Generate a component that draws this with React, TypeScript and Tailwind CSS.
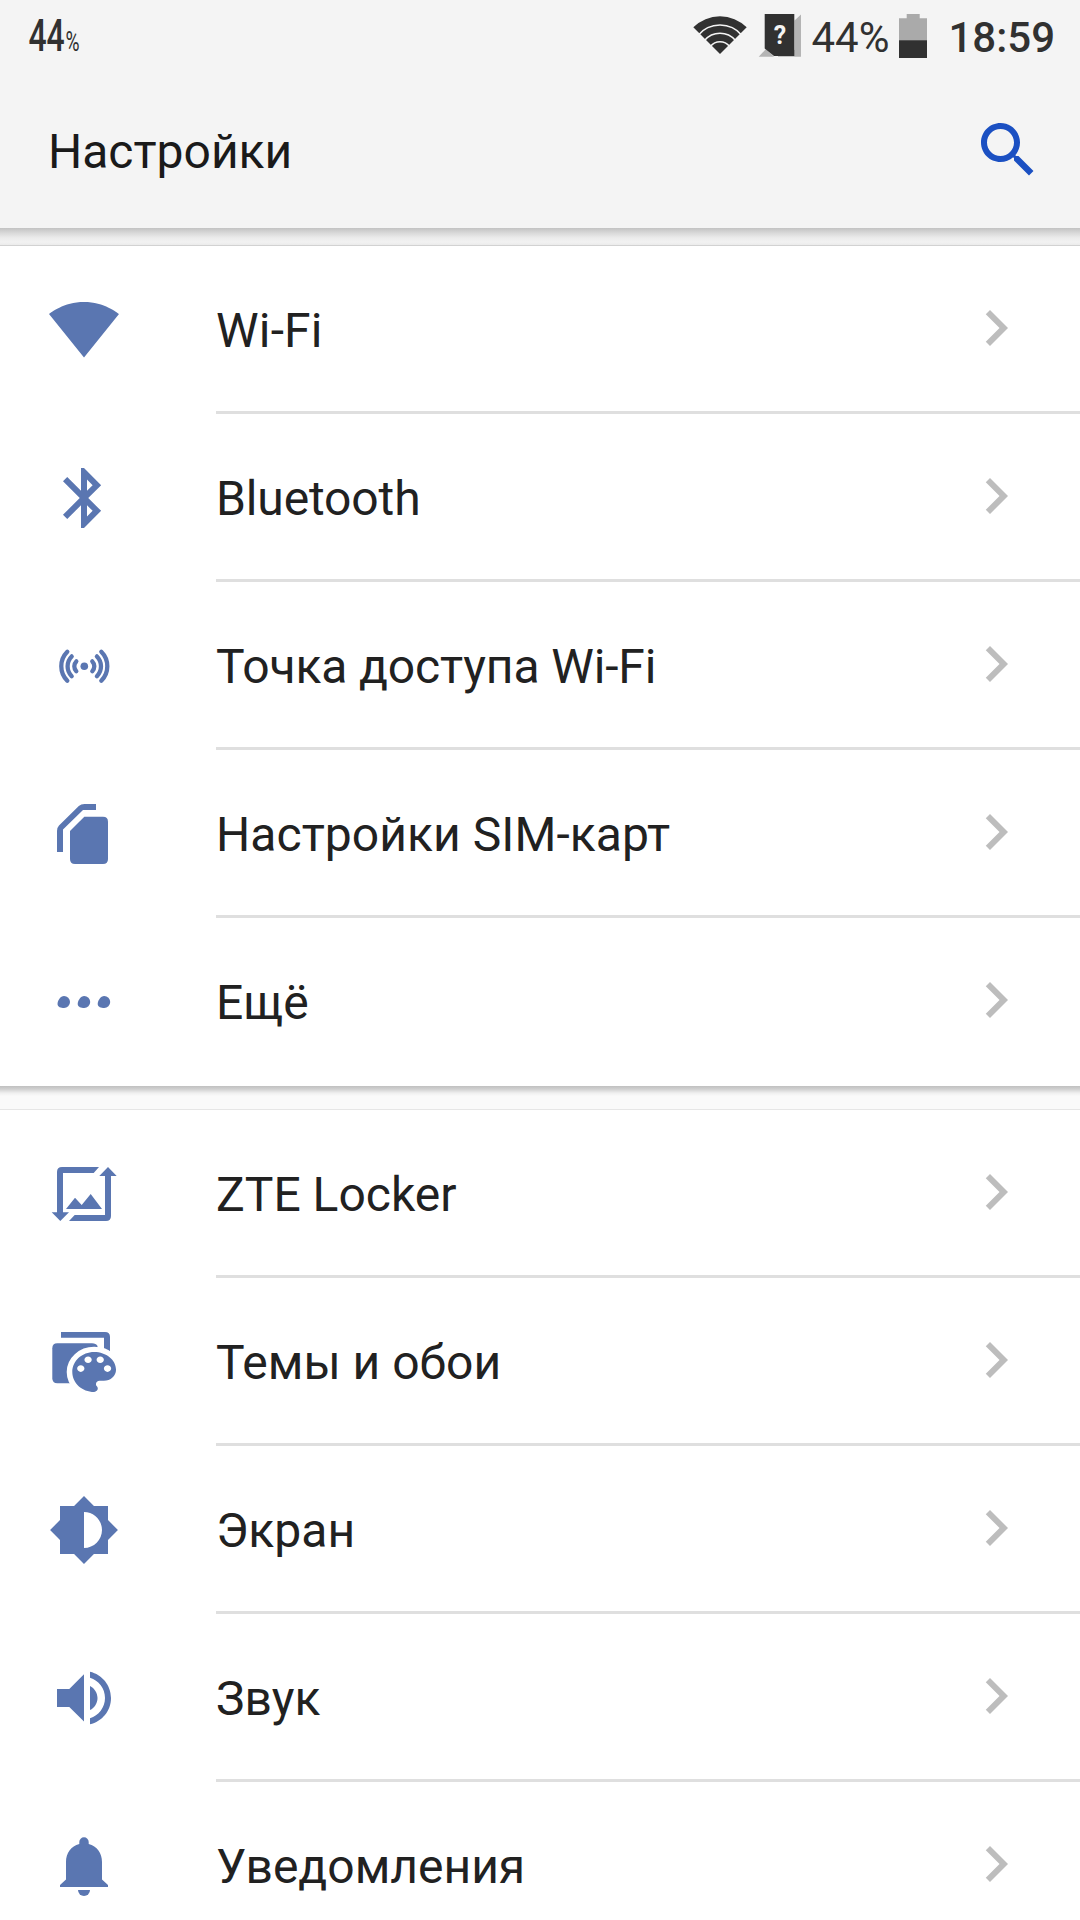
import type { ReactNode } from 'react';

type SettingsItem = { id: string; label: string; icon: ReactNode; tracking?: string };

const connectionItems: SettingsItem[] = [
    {
        id: 'wifi',
        label: 'Wi-Fi',
        tracking: 'tracking-[0.2px]',
        icon: <path d="M36 63.5L71 20C69.5 19 56.5 8 36 8S2.5 19 1 20z" />,
    },
    {
        id: 'bluetooth',
        label: 'Bluetooth',
        tracking: 'tracking-[-0.13px]',
        icon: (
            <path
                transform="scale(3)"
                d="M17.71 7.71L12 2h-1v7.59L6.41 5 5 6.41 10.59 12 5 17.59 6.41 19 11 14.41V22h1l5.71-5.71-4.3-4.29 4.3-4.29zM13 5.83l1.88 1.88L13 9.59V5.83zm1.88 10.46L13 18.17v-3.76l1.88 1.88z"
            />
        ),
    },
    {
        id: 'hotspot',
        label: 'Точка доступа Wi-Fi',
        tracking: 'tracking-[-0.13px]',
        icon: (
            <>
                <circle cx="36.3" cy="36.3" r="3.8" />
                <g fill="none" stroke="currentColor" strokeWidth="4.3" strokeLinecap="round">
                    <path d="M19.3 21.8A20.5 20.5 0 0 0 19.3 50.8M23.7 26.4A14 14 0 0 0 23.7 46.2M28.3 31.4A7 7 0 0 0 28.3 41.2" />
                    <path d="M53.3 21.8A20.5 20.5 0 0 1 53.3 50.8M48.9 26.4A14 14 0 0 1 48.9 46.2M44.3 31.4A7 7 0 0 1 44.3 41.2" />
                </g>
            </>
        ),
    },
    {
        id: 'sim',
        label: 'Настройки SIM-карт',
        tracking: 'tracking-[0.06px]',
        icon: (
            <>
                <path d="M48 6H36.5Q33 6 30.8 8L11 27.5Q9 29.5 9 33V54H15V31.5L35 12H48z" />
                <path d="M36.3 18.7H55Q60 18.7 60 23.7V61Q60 66 55 66H27Q22 66 22 61V33z" />
            </>
        ),
    },
    {
        id: 'more',
        label: 'Ещё',
        icon: (
            <>
                <path id="dot" d="M9.5 38C9.5 34.5 12.5 30 16 30A6 6 0 0 1 16 42C13 42 9.5 41 9.5 38z" />
                <use href="#dot" x="20.2" />
                <use href="#dot" x="40.2" />
            </>
        ),
    },
];

const deviceItems: SettingsItem[] = [
    {
        id: 'locker',
        label: 'ZTE Locker',
        icon: (
            <>
                <path d="M51 9H14Q9 9 9 14V54.3H3.7L12.3 63L21 54.3H15V15H45.7z" />
                <path d="M21 63H58Q63 63 63 58V18H68.7L60 9L51.3 18H57V57H26.7z" />
                <path d="M18 51L27 39.7L33.7 47L42.7 36L54 51z" />
            </>
        ),
    },
    {
        id: 'themes',
        label: 'Темы и обои',
        icon: (
            <>
                <path d="M13 6H57Q62 6 62 11V28H56V11.7H13z" />
                <path d="M9.3 17.3H44Q48 17.3 49.5 20V57.3H9.3Q4.3 57.3 4.3 52.3V22.3Q4.3 17.3 9.3 17.3z" />
                <g transform="translate(17 19.3) scale(2.43 2.22)">
                    <path
                        className="fill-white stroke-white"
                        strokeWidth="4.6"
                        d="M12 3c-4.97 0-9 4.03-9 9s4.03 9 9 9c.83 0 1.5-.67 1.5-1.5 0-.39-.15-.74-.39-1.01-.23-.26-.38-.61-.38-.99 0-.83.67-1.5 1.5-1.5H16c2.76 0 5-2.24 5-5 0-4.42-4.03-8-9-8z"
                    />
                    <path d="M12 3c-4.97 0-9 4.03-9 9s4.03 9 9 9c.83 0 1.5-.67 1.5-1.5 0-.39-.15-.74-.39-1.01-.23-.26-.38-.61-.38-.99 0-.83.67-1.5 1.5-1.5H16c2.76 0 5-2.24 5-5 0-4.42-4.03-8-9-8zm-5.5 9c-.83 0-1.5-.67-1.5-1.5S5.67 9 6.5 9 8 9.67 8 10.5 7.33 12 6.5 12zm3-4C8.67 8 8 7.33 8 6.5S8.67 5 9.5 5s1.5.67 1.5 1.5S10.33 8 9.5 8zm5 0c-.83 0-1.5-.67-1.5-1.5S13.67 5 14.5 5s1.5.67 1.5 1.5S15.33 8 14.5 8zm3 4c-.83 0-1.5-.67-1.5-1.5S16.67 9 17.5 9s1.5.67 1.5 1.5-.67 1.5-1.5 1.5z" />
                </g>
            </>
        ),
    },
    {
        id: 'display',
        label: 'Экран',
        icon: (
            <path
                transform="scale(3)"
                d="M20 15.31L23.31 12 20 8.69V4h-4.69L12 .69 8.69 4H4v4.69L.69 12 4 15.31V20h4.69L12 23.31 15.31 20H20v-4.69zM12 18V6c3.31 0 6 2.69 6 6s-2.69 6-6 6z"
            />
        ),
    },
    {
        id: 'sound',
        label: 'Звук',
        icon: (
            <path
                transform="scale(3)"
                d="M3 9v6h4.1l4.9 4.8V4.1L7.1 9H3zm13.5 3c0-1.77-1.02-3.29-2.5-4.03v8.05c1.48-.73 2.5-2.25 2.5-4.02zM14 3.23v2.06c2.89.86 5 3.54 5 6.71s-2.11 5.85-5 6.71v2.06c4.01-.91 7-4.49 7-8.77s-2.99-7.86-7-8.77z"
            />
        ),
    },
    {
        id: 'notifications',
        label: 'Уведомления',
        icon: (
            <>
                <path d="M12 57V55L18 49.5V32C18 23 23 16 31.3 14V12A4.7 4.7 0 0 1 40.7 12V14C49 16 54 23 54 32V49.5L60 55V57z" />
                <path d="M30 60H42A6 6 0 0 1 30 60z" />
            </>
        ),
    },
];

const StatusBar = () => (
    <div className="h-[72px] shrink-0 flex items-start justify-between text-[#313131]">
        <div className="pl-10 pt-[9px] flex items-baseline origin-left scale-x-[0.71] w-[110px]">
            <span className="text-[45px] leading-[53px] font-medium">44</span>
            <span className="text-[27px] ml-px">%</span>
        </div>

        <div className="flex items-start pr-[25px]">
            <svg className="w-[56px] h-[44px] mt-[14px]" viewBox="0 0 56 44" fill="currentColor">
                <path d="M28 40L1.3 13.3A38 38 0 0 1 54.7 13.3z" />
                <g className="stroke-[#f4f4f4]" fill="none" strokeWidth="1.5">
                    <path d="M6 21.5A28.5 28.5 0 0 1 50 21.5" />
                    <path d="M12.5 26.5A20.3 20.3 0 0 1 43.5 26.5" />
                    <path d="M18.5 32.3A12.2 12.2 0 0 1 37.5 32.3" />
                </g>
            </svg>
            <svg className="w-[44px] h-[44px] ml-[10px] mt-[14px]" viewBox="0 0 44 44">
                <path className="fill-[#b4b4b4]" d="M.7 42.7L8 35L16 42.7zM36.5 6.5L43 .5V42.7H20V36H36.5z" />
                <path fill="currentColor" d="M6.7 0H36.3V42H16L6.7 34.5z" />
                <text x="22" y="29.7" textAnchor="middle" className="fill-[#f4f4f4] text-[25px] font-bold">?</text>
            </svg>
            <span className="ml-[9px] mt-[13px] text-[42px] leading-[50px] w-[78px]">44%</span>
            <svg className="w-[28px] h-[44px] ml-[10px] mt-[14px]" viewBox="0 0 28 44">
                <path className="fill-[#aaaaaa]" d="M7.7 0H20.7V4.3H28V28H0V4.3H7.7z" />
                <path fill="currentColor" d="M0 26.3H28V44H0z" />
            </svg>
            <span className="ml-[21px] mt-[13px] text-[42px] leading-[50px] font-medium">18:59</span>
        </div>
    </div>
);

const SettingsRow = ({ item, isLast }: { item: SettingsItem; isLast: boolean }) => (
    <div className="h-[168px] flex">
        <div className="w-[216px] shrink-0 pl-12 pt-12">
            <svg className="w-[72px] h-[72px] text-[#5a76b1]" viewBox="0 0 72 72" fill="currentColor">
                {item.icon}
            </svg>
        </div>
        <div className={`flex-1 flex items-start justify-between pr-12 ${isLast ? '' : 'border-b-[3px] border-[#dfdfdf]'}`}>
            <span className={`mt-[57px] text-[48px] leading-[56px] whitespace-nowrap ${item.tracking ?? ''}`}>{item.label}</span>
            <svg className="w-[72px] h-[72px] mt-[46px] text-[#bdbdbd]" viewBox="0 0 24 24" fill="currentColor">
                <path d="M10 6L8.59 7.41 13.17 12l-4.58 4.59L10 18l6-6z" />
            </svg>
        </div>
    </div>
);

const SettingsCard = ({ items }: { items: SettingsItem[] }) => (
    <div className="shrink-0 bg-white">
        {items.map((item, i) => (
            <SettingsRow key={item.id} item={item} isLast={i === items.length - 1} />
        ))}
    </div>
);

const App = () => (
    <div className="w-[1080px] h-[1920px] overflow-hidden flex flex-col bg-[#fafafa] text-[#212121] font-['Roboto',sans-serif]">
        <header className="h-[228px] shrink-0 flex flex-col bg-[#f4f4f4]">
            <StatusBar />
            <div className="flex-1 flex items-start justify-between pl-12 pr-9">
                <h1 className="mt-[52px] text-[48px] leading-[56px] text-[#1a1a1a]">Настройки</h1>
                <svg className="w-[72px] h-[72px] mt-[42px] text-[#1b50c2]" viewBox="0 0 24 24" fill="currentColor">
                    <path d="M15.5 14h-.79l-.28-.27C15.41 12.59 16 11.11 16 9.5 16 5.91 13.09 3 9.5 3S3 5.91 3 9.5 5.91 16 9.5 16c1.61 0 3.09-.59 4.23-1.57l.27.28v.79l5 4.99L20.49 19l-4.99-5zm-6 0C7.01 14 5 11.99 5 9.5S7.01 5 9.5 5 14 7.01 14 9.5 11.99 14 9.5 14z" />
                </svg>
            </div>
        </header>

        {/* Header shadow */}
        <div className="h-[18px] shrink-0 border-b border-[#d2d2d2] bg-[linear-gradient(#c2c2c2,#d9d9d9_5px,#ececec_10px,#f2f2f2_14px,#ebebeb)]" />
        <SettingsCard items={connectionItems} />
        {/* Card shadow */}
        <div className="h-6 shrink-0 border-b border-[#e6e6e6] bg-[linear-gradient(#c0c0c0,#cfcfcf_3px,#efefef_7px,#fafafa_10px)]" />
        <SettingsCard items={deviceItems} />
    </div>
);

export default App;
